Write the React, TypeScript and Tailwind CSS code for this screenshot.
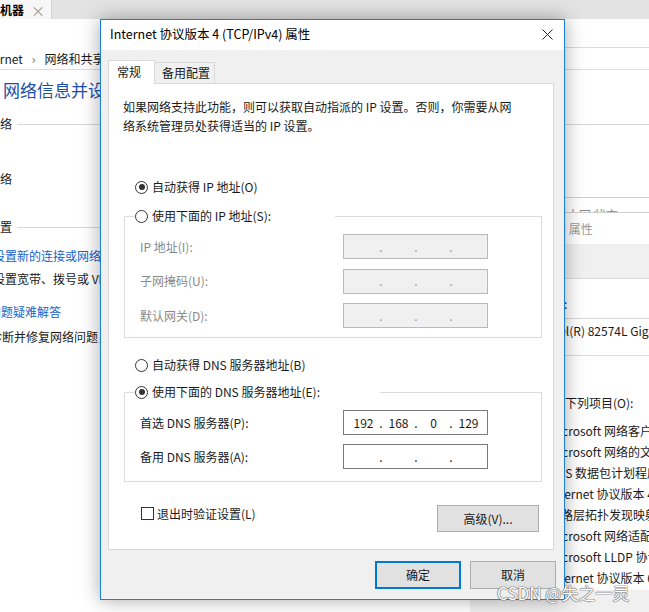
import React from 'react';

const cjk = "font-['Noto_Sans_CJK_SC','Noto_Sans',sans-serif]";

function Radio({ checked }: { checked?: boolean }) {
  return (
    <span className="flex h-[13px] w-[13px] shrink-0 items-center justify-center rounded-full border border-[#333] bg-white">
      {checked && <span className="h-[6px] w-[6px] rounded-full bg-[#333]" />}
    </span>
  );
}

function IpBox({ parts, disabled }: { parts?: string[]; disabled?: boolean }) {
  const p = parts ?? ['', '', '', ''];
  return (
    <div
      className={
        disabled
          ? 'flex h-[25px] w-[145px] items-center border border-[#b9b9b9] bg-[#f0f0f0] pl-[5px] text-[#9a9a9a]'
          : 'flex h-[25px] w-[145px] items-center border border-[#7a7a7a] bg-white pl-[5px] text-[#1a1a1a]'
      }
    >
      {p.map((v, i) => (
        <React.Fragment key={i}>
          <span className="w-[29px] text-center">{v}</span>
          {i < 3 && <span className="w-[6px] text-center">.</span>}
        </React.Fragment>
      ))}
    </div>
  );
}

function IpRow({ label, parts, disabled }: { label: string; parts?: string[]; disabled?: boolean }) {
  return (
    <div className="flex h-[25px] items-center">
      <span className={disabled ? 'w-[203px] text-[#8a8a8a]' : 'w-[203px] text-[#1a1a1a]'}>{label}</span>
      <IpBox parts={parts} disabled={disabled} />
    </div>
  );
}

function ControlPanel() {
  return (
    <div className="flex h-full flex-col bg-white text-[12px] text-[#1a1a1a]">
      <div className="flex h-[19px] shrink-0 bg-[#e3e3e3]">
        <div className="flex w-[52px] items-center justify-between border-r border-[#d0d0d0] bg-[#f7f7f7] pr-[6px]">
          <span className="font-bold text-black">机器</span>
          <span className="text-[14px] leading-none text-[#9a9a9a]">×</span>
        </div>
      </div>
      <div className="mt-[29px] flex h-[22px] shrink-0 items-center border-b border-[#dcdcdc]">
        <div className="flex flex-1 items-center overflow-hidden whitespace-nowrap">
          <span className="-ml-[22px]">Internet</span>
          <span className="ml-[9px] text-[#666]">›</span>
          <span className="ml-[9px]">网络和共享中心</span>
        </div>
        <div className="-mt-px h-[23px] w-[200px] border-l border-t border-[#dcdcdc]" />
      </div>
      <div className="mt-[8px] h-[24px] overflow-hidden whitespace-nowrap pl-[3px] text-[17px] leading-[24px] text-[#1e4fa8]">
        网络信息并设置连接
      </div>
      <div className="mt-[13px] flex h-[18px] items-center">
        <span className="-ml-[12px]">网络</span>
        <span className="ml-[5px] h-px flex-1 bg-[#d6d6d6]" />
      </div>
      <div className="mt-[37px] h-[18px]">
        <span className="-ml-[12px]">网络</span>
      </div>
      <div className="mt-[30px] flex h-[18px] items-center">
        <span className="-ml-[12px]">设置</span>
        <span className="ml-[5px] h-px flex-1 bg-[#d6d6d6]" />
      </div>
      <div className="mt-[11px] h-[18px] whitespace-nowrap text-[#1a5fc8]">
        <span className="-ml-[7px]">设置新的连接或网络</span>
      </div>
      <div className="mt-[5px] h-[18px] whitespace-nowrap">
        <span className="-ml-[7px]">设置宽带、拨号或 VPN 连接；或设置路由器或接入点。</span>
      </div>
      <div className="mt-[15px] h-[18px] whitespace-nowrap text-[#1a5fc8]">
        <span className="-ml-[11px]">问题疑难解答</span>
      </div>
      <div className="mt-[7px] h-[18px] whitespace-nowrap">
        <span className="-ml-[10px]">诊断并修复网络问题，或获得疑难解答信息。</span>
      </div>
    </div>
  );
}

const items = [
  'Microsoft 网络客户端',
  'Microsoft 网络的文件和打印机共享',
  'QoS 数据包计划程序',
  'Internet 协议版本 4 (TCP/IPv4)',
  '链路层拓扑发现映射器 I/O 驱动程序',
  'Microsoft 网络适配器多路传送器协议',
  'Microsoft LLDP 协议驱动程序',
  'Internet 协议版本 6 (TCP/IPv6)',
];

function EthernetDialogs() {
  return (
    <>
      {/* status dialog behind */}
      <div className="absolute left-[470px] top-[197px] h-[30px] w-[260px] border-t border-[#cfcfcf] bg-white text-[12px] text-[#888]">
        <div className="pl-[85px] pt-[8px]">以太网 状态</div>
      </div>
      {/* properties dialog */}
      <div className="absolute left-[470px] top-[212px] flex h-[400px] w-[260px] flex-col border-t border-[#cfcfcf] bg-[#f0f0f0] text-[12px] text-[#1a1a1a]">
        <div className="flex h-[31px] shrink-0 items-center bg-white pl-[60px] text-[#9a9a9a]">以太网 属性</div>
        <div className="mt-[34px] flex flex-1 flex-col border-t border-[#d9d9d9] bg-white">
          <div className="ml-[34px] mt-[16px] h-[18px]">连接时使用:</div>
          <div className="ml-[22px] mt-[5px] flex h-[38px] items-start whitespace-nowrap border-y border-[#d9d9d9] pl-[52px] pt-[3px]">
            Intel(R) 82574L Gigabit Network Connection
          </div>
          <div className="ml-[35px] mt-[38px] h-[18px] whitespace-nowrap">此连接使用下列项目(O):</div>
          <div className="ml-[25px] mt-[8px] flex flex-col">
            {items.map((t) => (
              <div key={t} className="flex h-[21px] items-center whitespace-nowrap pl-[54px]">
                {t}
              </div>
            ))}
          </div>
        </div>
        <div className="h-[22px] shrink-0 bg-[#f0f0f0]" />
      </div>
    </>
  );
}

function MainDialog() {
  return (
    <div className="absolute left-[100px] top-[19px] flex h-[581px] w-[465px] flex-col border border-[#1a7fd6] bg-[#f0f0f0] text-[12px] leading-[16px] text-[#1a1a1a] shadow-[0_0_18px_rgba(0,0,0,0.35)]">
      <div className="flex h-[30px] shrink-0 items-center justify-between bg-white pb-[2px] pl-[9px] pr-[11px] text-[12.5px] text-black">
        <span>Internet 协议版本 4 (TCP/IPv4) 属性</span>
        <svg width="11" height="11" viewBox="0 0 11 11" className="mt-[1px]">
          <path d="M0.5 0.5 L10.5 10.5 M10.5 0.5 L0.5 10.5" stroke="#222" strokeWidth="1" fill="none" />
        </svg>
      </div>
      <div className="flex flex-1 flex-col px-[7px] pt-[10px]">
        <div className="flex h-[23px] items-end">
          <div className="relative z-10 -mb-px flex h-[24px] w-[47px] items-center border border-b-0 border-[#d9d9d9] bg-white pb-[2px] pl-[8px]">
            常规
          </div>
          <div className="-ml-px flex h-[21px] w-[61px] items-center border border-b-0 border-[#d9d9d9] bg-[#f0f0f0] pl-[7px]">
            备用配置
          </div>
        </div>
        <div className="flex h-[467px] w-[446px] flex-col border border-[#d9d9d9] bg-white">
          <p className="ml-[14px] mt-[13px] whitespace-nowrap leading-[19px]">
            如果网络支持此功能，则可以获取自动指派的 IP 设置。否则，你需要从网
            <br />
            络系统管理员处获得适当的 IP 设置。
          </p>
          <div className="ml-[26px] mt-[44px] flex h-[16px] items-center gap-[4px]">
            <Radio checked />
            <span>自动获得 IP 地址(O)</span>
          </div>
          <fieldset className="ml-[15px] mt-[13px] w-[418px] border border-[#dcdcdc]">
            <legend className="ml-[10px] flex h-[16px] items-center gap-[4px] pr-[64px]">
              <Radio />
              <span>使用下面的 IP 地址(S):</span>
            </legend>
            <div className="flex flex-col gap-[9.5px] pb-[9px] pl-[15px] pt-[10px]">
              <IpRow label="IP 地址(I):" disabled />
              <IpRow label="子网掩码(U):" disabled />
              <IpRow label="默认网关(D):" disabled />
            </div>
          </fieldset>
          <div className="ml-[26px] mt-[19px] flex h-[16px] items-center gap-[4px]">
            <Radio />
            <span>自动获得 DNS 服务器地址(B)</span>
          </div>
          <fieldset className="ml-[15px] mt-[11px] w-[418px] border border-[#dcdcdc]">
            <legend className="ml-[10px] flex h-[16px] items-center gap-[4px] pr-[60px]">
              <Radio checked />
              <span>使用下面的 DNS 服务器地址(E):</span>
            </legend>
            <div className="flex flex-col gap-[9px] pb-[12px] pl-[15px] pt-[10px]">
              <IpRow label="首选 DNS 服务器(P):" parts={['192', '168', '0', '129']} />
              <IpRow label="备用 DNS 服务器(A):" />
            </div>
          </fieldset>
          <div className="mt-[23px] flex items-start justify-between">
            <div className="ml-[32px] mt-[2px] flex h-[13px] items-center gap-[3px]">
              <span className="h-[13px] w-[13px] border border-[#333] bg-white" />
              <span>退出时验证设置(L)</span>
            </div>
            <button className="mr-[14px] flex h-[27px] w-[102px] items-center justify-center border border-[#adadad] bg-[#e1e1e1]">
              高级(V)...
            </button>
          </div>
        </div>
        <div className="mr-[1px] mt-[11px] flex justify-end gap-[9px]">
          <button className="flex h-[28px] w-[86px] items-center justify-center border-2 border-[#0078d7] bg-[#e1e1e1]">
            确定
          </button>
          <button className="flex h-[28px] w-[86px] items-center justify-center border border-[#adadad] bg-[#e1e1e1]">
            取消
          </button>
        </div>
      </div>
    </div>
  );
}

export default function App() {
  return (
    <div className={`relative h-[612px] w-[649px] overflow-hidden bg-white ${cjk}`}>
      <ControlPanel />
      <EthernetDialogs />
      <MainDialog />
      <div className="absolute left-[497px] top-[580px] whitespace-nowrap text-[17px] text-white [text-shadow:0_0_1px_#555,0_0_1px_#555,0_0_1px_#555]">
        CSDN @失之一灵
      </div>
    </div>
  );
}
